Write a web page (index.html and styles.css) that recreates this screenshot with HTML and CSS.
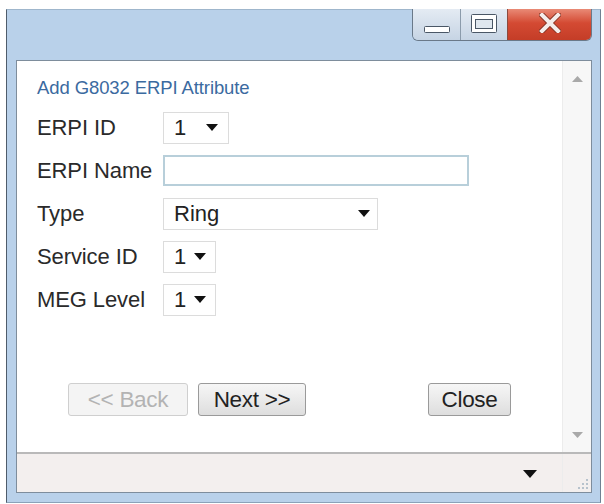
FILE: index.html
```html
<!DOCTYPE html>
<html>
<head>
<meta charset="utf-8">
<link rel="stylesheet" href="styles.css">
</head>
<body>
<div class="window">
  <div class="titlebar">
    <div class="caption-buttons">
      <div class="cb cb-min">
        <svg width="26" height="7" viewBox="0 0 26 7"><rect x="0.5" y="0.5" width="25" height="6" rx="1" fill="#fff" stroke="#4a5766"/></svg>
      </div>
      <div class="cb cb-max">
        <svg width="26" height="19" viewBox="0 0 26 19"><rect x="0.5" y="0.5" width="25" height="18" rx="1" fill="#fff" stroke="#4a5766"/><rect x="4.5" y="5.5" width="17" height="9" fill="#dfe7ef" stroke="#4a5766"/></svg>
      </div>
      <div class="cb cb-close">
        <svg width="22" height="20" viewBox="0 0 22 20"><path d="M3 2 L19 18 M19 2 L3 18" stroke="#8a3526" stroke-width="6" stroke-linecap="square"/><path d="M3 2 L19 18 M19 2 L3 18" stroke="#f4ecea" stroke-width="4" stroke-linecap="square"/></svg>
      </div>
    </div>
  </div>
  <div class="client">
    <div class="main">
      <div class="form">
        <div class="form-title">Add G8032 ERPI Attribute</div>
        <div class="row">
          <span class="label">ERPI ID</span>
          <div class="select sel-id"><span>1</span><svg class="arrow" width="12" height="7" viewBox="0 0 12 7"><path d="M0 0 H12 L6 7 Z" fill="#111"/></svg></div>
        </div>
        <div class="row">
          <span class="label">ERPI Name</span>
          <div class="input"></div>
        </div>
        <div class="row">
          <span class="label">Type</span>
          <div class="select sel-type"><span>Ring</span><svg class="arrow" width="12" height="7" viewBox="0 0 12 7"><path d="M0 0 H12 L6 7 Z" fill="#111"/></svg></div>
        </div>
        <div class="row">
          <span class="label">Service ID</span>
          <div class="select sel-small"><span>1</span><svg class="arrow" width="12" height="7" viewBox="0 0 12 7"><path d="M0 0 H12 L6 7 Z" fill="#111"/></svg></div>
        </div>
        <div class="row">
          <span class="label">MEG Level</span>
          <div class="select sel-small"><span>1</span><svg class="arrow" width="12" height="7" viewBox="0 0 12 7"><path d="M0 0 H12 L6 7 Z" fill="#111"/></svg></div>
        </div>
        <div class="buttons">
          <div class="btn btn-back">&lt;&lt; Back</div>
          <div class="btn btn-next">Next &gt;&gt;</div>
          <div class="btn btn-close">Close</div>
        </div>
      </div>
      <div class="vscroll">
        <svg width="11" height="6" viewBox="0 0 11 6"><path d="M0 6 H11 L5.5 0 Z" fill="#a9a9a9"/></svg>
        <svg width="11" height="6" viewBox="0 0 11 6"><path d="M0 0 H11 L5.5 6 Z" fill="#a9a9a9"/></svg>
      </div>
    </div>
    <div class="status">
      <svg class="status-arrow" width="14" height="8" viewBox="0 0 14 8"><path d="M0 0 H14 L7 8 Z" fill="#111"/></svg>
      <div class="grip">
        <svg width="12" height="12" viewBox="0 0 12 12"><g fill="#b7c2cc"><rect x="9" y="1" width="2" height="2"/><rect x="5" y="5" width="2" height="2"/><rect x="9" y="5" width="2" height="2"/><rect x="1" y="9" width="2" height="2"/><rect x="5" y="9" width="2" height="2"/><rect x="9" y="9" width="2" height="2"/></g></svg>
      </div>
    </div>
  </div>
</div>
</body>
</html>
```

FILE: styles.css
```css
* { box-sizing: border-box; }
html, body { margin: 0; padding: 0; background: #fff; }
body {
  font-family: "Liberation Sans", Arial, sans-serif;
  width: 604px;
  height: 504px;
  overflow: hidden;
}
.window {
  margin: 9px 0 0 6px;
  width: 595px;
  height: 494px;
  background: #b9d1ea;
  border-left: 1px solid #4e5c6b;
  border-right: 1px solid #6f8193;
  border-top: 1px solid #9fb6cc;
  border-bottom: 1px solid #8ba2b9;
  padding: 0 8px 0 9px;
  display: flex;
  flex-direction: column;
}
.titlebar {
  height: 50px;
  display: flex;
  justify-content: flex-end;
  align-items: flex-start;
}
.caption-buttons {
  display: flex;
  height: 32px;
  margin-top: -1px;
  border: 1px solid #6a7989;
  border-top: none;
  border-radius: 0 0 6px 6px;
  overflow: hidden;
}
.cb {
  height: 100%;
  display: flex;
  align-items: center;
  justify-content: center;
}
.cb-min {
  width: 48px;
  background: linear-gradient(#e4ebf3, #c6d4e4);
  border-right: 1px solid #8b9bab;
  align-items: flex-end;
  padding-bottom: 7px;
}
.cb-max {
  width: 47px;
  background: linear-gradient(#e4ebf3, #c6d4e4);
  border-right: 1px solid #8b4a3e;
  align-items: flex-start;
  padding-top: 5px;
}
.cb-close {
  width: 83px;
  background: linear-gradient(#e98a76 0%, #d44a33 45%, #c43d27 100%);
  align-items: flex-start;
  padding-top: 4px;
}
.client {
  flex: 1;
  background: #fff;
  border: 1px solid #7e8d9c;
  display: flex;
  flex-direction: column;
  margin-bottom: 9px;
}
.main {
  flex: 1;
  display: flex;
}
.form {
  flex: 1;
  padding: 16px 0 0 20px;
}
.form-title {
  font-size: 18.5px;
  line-height: 22px;
  color: #3b6aa0;
  margin-bottom: 7px;
  letter-spacing: -0.1px;
}
.row {
  height: 43px;
  display: flex;
  align-items: center;
}
.label {
  width: 126px;
  font-size: 22px;
  color: #2a2a2a;
  letter-spacing: -0.1px;
}
.select {
  height: 32px;
  border: 1px solid #dcdcdc;
  background: #fff;
  display: flex;
  align-items: center;
  justify-content: space-between;
  padding: 0 9px 0 10px;
  font-size: 22px;
  color: #222;
}
.sel-id { width: 66px; padding-right: 10px; }
.sel-type { width: 215px; padding-right: 7px; }
.sel-small { width: 53px; padding-right: 9px; }
.arrow { flex: none; }
.input {
  width: 306px;
  height: 31px;
  border: 2px solid #b8cfda;
  background: #fff;
}
.buttons {
  display: flex;
  margin: 62px 0 0 31px;
  height: 33px;
}
.btn {
  height: 33px;
  border: 1px solid #9a9a9a;
  border-radius: 3px;
  background: linear-gradient(#f6f6f6, #dedede);
  font-size: 22.5px;
  color: #222;
  display: flex;
  align-items: center;
  justify-content: center;
  letter-spacing: -0.3px;
}
.btn-back {
  width: 120px;
  border-color: #cfcfcf;
  background: #f4f4f4;
  color: #b3b3b3;
}
.btn-next {
  width: 108px;
  margin-left: 10px;
}
.btn-close {
  width: 83px;
  margin-left: 122px;
}
.vscroll {
  width: 29px;
  background: #f7f7f7;
  border-left: 1px solid #ececec;
  display: flex;
  flex-direction: column;
  justify-content: space-between;
  align-items: center;
  padding: 15px 0 14px;
}
.status {
  height: 40px;
  border-top: 2px solid #b9b9b9;
  background: #f3efee;
  display: flex;
  align-items: center;
  justify-content: flex-end;
}
.status-arrow {
  margin-right: 25px;
  margin-top: 2px;
}
.grip {
  width: 29px;
  height: 100%;
  border-left: 1px solid #ececec;
  display: flex;
  align-items: flex-end;
  justify-content: flex-end;
  padding: 0 2px 2px 0;
}
```
